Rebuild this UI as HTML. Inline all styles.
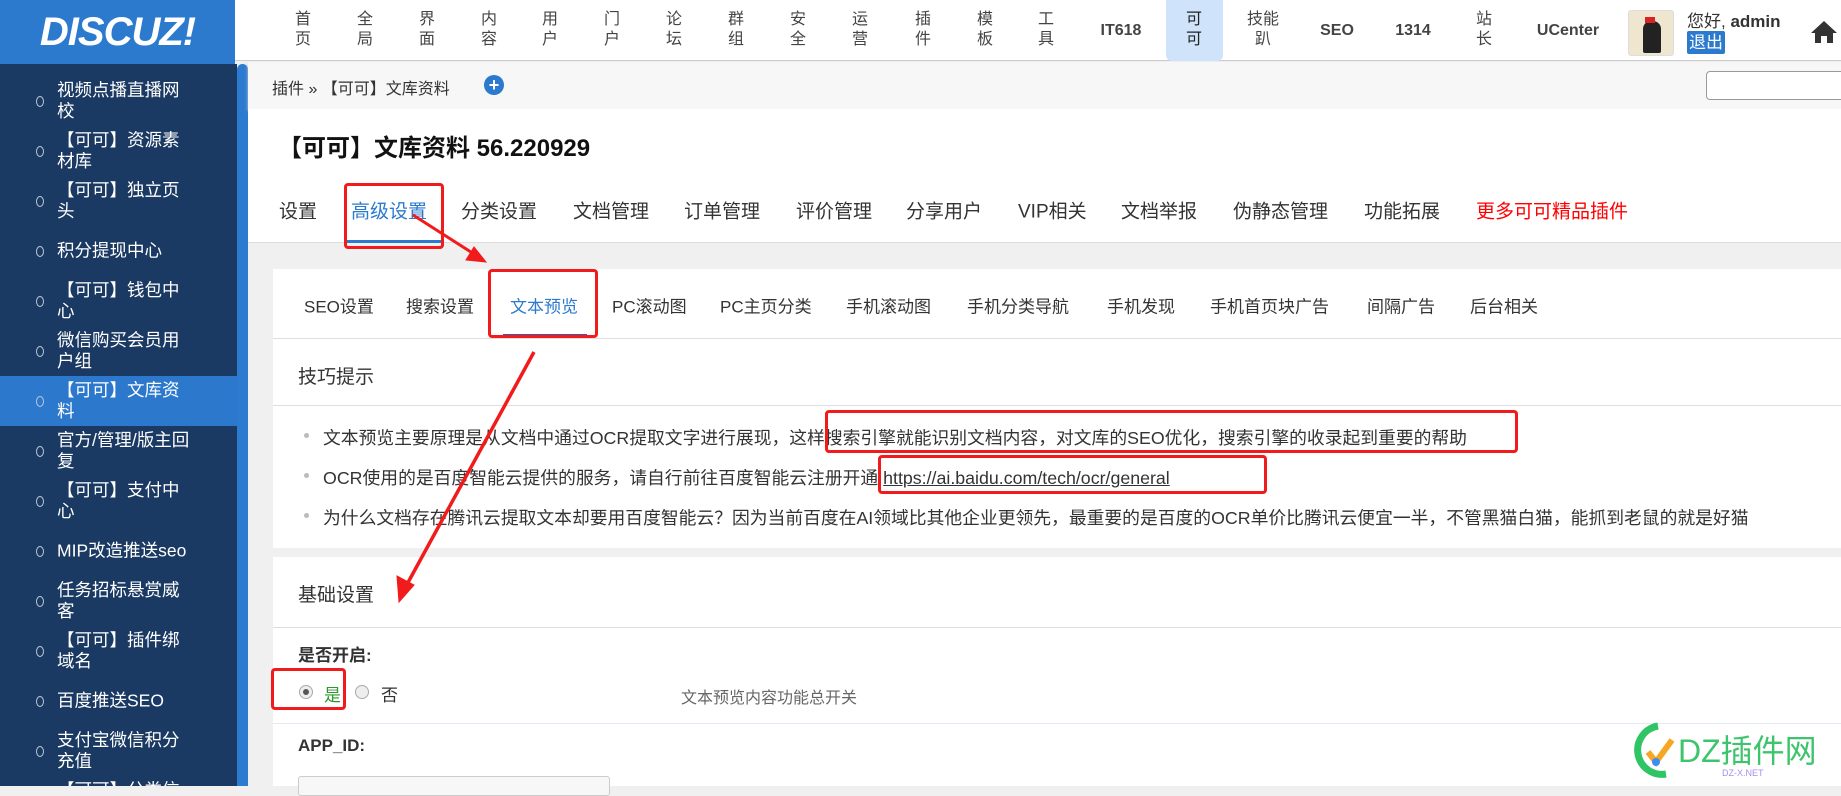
<!DOCTYPE html>
<html><head><meta charset="utf-8"><style>
*{margin:0;padding:0;box-sizing:border-box}
body{width:1841px;height:786px;overflow:hidden;background:#f0f0f0;font-family:"Liberation Sans","Noto Sans CJK SC",sans-serif;color:#333;position:relative}
.a{position:absolute;white-space:nowrap}
#hdr{position:absolute;left:0;top:0;width:1841px;height:61px;background:#fff;border-bottom:1px solid #ccc}
#logo{position:absolute;left:0;top:0;width:235px;height:64px;background:#2b7acd;color:#fff;font:italic bold 40px "Liberation Sans",sans-serif;text-align:center;line-height:64px;letter-spacing:-1px}
.nv{position:absolute;top:10px;font-size:16px;line-height:20px;color:#444;text-align:center;width:20px;margin-left:-10px;white-space:normal}
.nb{position:absolute;top:0;height:61px;line-height:61px;font-size:16px;font-weight:bold;color:#444;transform:translateX(-50%)}
#side{position:absolute;left:0;top:64px;width:237px;height:722px;background:#1b3a63;overflow:hidden}
.si{position:absolute;left:0;width:237px;height:50px;color:#fff;font-size:17.5px;line-height:21px}
.si span{position:absolute;left:57px;top:50%;transform:translateY(-50%);width:135px;white-space:normal}
.si i{position:absolute;left:36px;top:50%;width:8px;height:11px;margin-top:-5px;border:1px solid #bcc6d4;border-radius:50%}
.card{position:absolute;left:273px;width:1568px;background:#fff}
.t{position:absolute;font-size:19px;transform:translateY(-50%)}
.st{position:absolute;font-size:17px;transform:translateY(-50%);top:305px}
.rb{position:absolute;border:3px solid #f21b1b;border-radius:4px}
.tip{position:absolute;left:323px;font-size:17.8px;white-space:nowrap}
</style></head><body>
<div id="hdr"></div>
<div id="logo">DISCUZ!</div>
<div class="nv" style="left:303px">首页</div><div class="nv" style="left:365px">全局</div><div class="nv" style="left:427px">界面</div><div class="nv" style="left:489px">内容</div><div class="nv" style="left:550px">用户</div><div class="nv" style="left:612px">门户</div><div class="nv" style="left:674px">论坛</div><div class="nv" style="left:736px">群组</div><div class="nv" style="left:798px">安全</div><div class="nv" style="left:860px">运营</div><div class="nv" style="left:923px">插件</div><div class="nv" style="left:985px">模板</div><div class="nv" style="left:1046px">工具</div>
<div class="nb" style="left:1121px">IT618</div>
<div class="a" style="left:1166px;top:0;width:57px;height:61px;background:#cfe3fa;border-radius:0 0 6px 6px"></div>
<div class="nv" style="left:1194px;color:#222">可可</div>
<div class="nv" style="left:1263px;width:34px;margin-left:-17px">技能趴</div>
<div class="nb" style="left:1337px">SEO</div><div class="nb" style="left:1413px">1314</div>
<div class="nv" style="left:1484px">站长</div>
<div class="nb" style="left:1568px">UCenter</div>
<div class="a" style="left:1628px;top:10px;width:46px;height:46px;background:#efe6d0;border:1px solid #ddd;border-radius:3px"><div style="position:absolute;left:14px;top:10px;width:18px;height:32px;background:#222;border-radius:8px 8px 2px 2px"></div><div style="position:absolute;left:16px;top:6px;width:10px;height:6px;background:#d22"></div></div>
<div class="a" style="left:1687px;top:7px;font-size:17px">您好, <b>admin</b></div>
<div class="a" style="left:1687px;top:31px;background:#2b7acd;color:#fff;font-size:17px;padding:0 2px;border-radius:2px;line-height:23px">退出</div>
<svg class="a" style="left:1810px;top:20px" width="28" height="24" viewBox="0 0 28 24"><path d="M14 1 L1 13 H5 V23 H11 V16 H17 V23 H23 V13 H27 Z" fill="#333"/></svg>

<div id="side">
<div class="si" style="top:12px"><i></i><span>视频点播直播网校</span></div>
<div class="si" style="top:62px"><i></i><span>【可可】资源素材库</span></div>
<div class="si" style="top:112px"><i></i><span>【可可】独立页头</span></div>
<div class="si" style="top:162px"><i></i><span>积分提现中心</span></div>
<div class="si" style="top:212px"><i></i><span>【可可】钱包中心</span></div>
<div class="si" style="top:262px"><i></i><span>微信购买会员用户组</span></div>
<div class="si" style="top:312px;background:#2b78cc"><i></i><span>【可可】文库资料</span></div>
<div class="si" style="top:362px"><i></i><span>官方/管理/版主回复</span></div>
<div class="si" style="top:412px"><i></i><span>【可可】支付中心</span></div>
<div class="si" style="top:462px"><i></i><span>MIP改造推送seo</span></div>
<div class="si" style="top:512px"><i></i><span>任务招标悬赏威客</span></div>
<div class="si" style="top:562px"><i></i><span>【可可】插件绑域名</span></div>
<div class="si" style="top:612px"><i></i><span>百度推送SEO</span></div>
<div class="si" style="top:662px"><i></i><span>支付宝微信积分充值</span></div>
<div class="si" style="top:712px"><i></i><span>【可可】分类信息</span></div>
</div>
<div class="a" style="left:237px;top:64px;width:11px;height:722px;background:#2c7bd1;border-radius:6px 6px 0 0"></div>

<div class="a" style="left:248px;top:62px;width:1593px;height:47px;background:#f7f7f7;box-shadow:0 2px 3px #ccc"></div>
<div class="a" style="left:272px;top:75px;font-size:16px">插件 » 【可可】文库资料</div>
<div class="a" style="left:484px;top:75px;width:20px;height:20px;border-radius:50%;background:#2b7acd;color:#fff;font:bold 18px/20px 'Liberation Sans';text-align:center">+</div>
<div class="a" style="left:1706px;top:71px;width:140px;height:29px;border:1px solid #999;border-radius:4px;background:#fff"></div>

<div class="a" style="left:248px;top:109px;width:1593px;height:134px;background:#fff;border-bottom:1px solid #ddd"></div>
<div class="a" style="left:278px;top:128px;font-size:24px;font-weight:bold;color:#111">【可可】文库资料 56.220929</div>
<div class="t" style="left:279px;top:210px">设置</div>
<div class="t" style="left:351px;top:210px;color:#2b7acd">高级设置</div>
<div class="a" style="left:347px;top:240px;width:94px;height:3px;background:#2b7acd"></div>
<div class="t" style="left:461px;top:210px">分类设置</div><div class="t" style="left:573px;top:210px">文档管理</div><div class="t" style="left:684px;top:210px">订单管理</div><div class="t" style="left:796px;top:210px">评价管理</div><div class="t" style="left:906px;top:210px">分享用户</div><div class="t" style="left:1018px;top:210px">VIP相关</div><div class="t" style="left:1121px;top:210px">文档举报</div><div class="t" style="left:1233px;top:210px">伪静态管理</div><div class="t" style="left:1364px;top:210px">功能拓展</div><div class="t" style="left:1476px;top:210px;color:#f00">更多可可精品插件</div>

<div class="card" style="top:269px;height:279px"></div>
<div class="a" style="left:273px;top:338px;width:1568px;height:1px;background:#ddd"></div>
<div class="st" style="left:304px">SEO设置</div><div class="st" style="left:406px">搜索设置</div><div class="st" style="left:510px;color:#2b7acd">文本预览</div><div class="st" style="left:612px">PC滚动图</div><div class="st" style="left:720px">PC主页分类</div><div class="st" style="left:846px">手机滚动图</div><div class="st" style="left:967px">手机分类导航</div><div class="st" style="left:1107px">手机发现</div><div class="st" style="left:1210px">手机首页块广告</div><div class="st" style="left:1367px">间隔广告</div><div class="st" style="left:1470px">后台相关</div>
<div class="a" style="left:503px;top:334px;width:84px;height:3px;background:#3a5fa8"></div>
<div class="a" style="left:298px;top:362px;font-size:19px">技巧提示</div>
<div class="a" style="left:273px;top:405px;width:1568px;height:1px;background:#ddd"></div>
<div class="a" style="left:304px;top:433px;width:5px;height:5px;border-radius:50%;background:#bbb"></div>
<div class="a" style="left:304px;top:473px;width:5px;height:5px;border-radius:50%;background:#bbb"></div>
<div class="a" style="left:304px;top:513px;width:5px;height:5px;border-radius:50%;background:#bbb"></div>
<div class="tip" style="top:424px">文本预览主要原理是从文档中通过OCR提取文字进行展现，这样搜索引擎就能识别文档内容，对文库的SEO优化，搜索引擎的收录起到重要的帮助</div>
<div class="tip" style="top:464px">OCR使用的是百度智能云提供的服务，请自行前往百度智能云注册开通 <span style="text-decoration:underline">https://ai.baidu.com/tech/ocr/general</span></div>
<div class="tip" style="top:504px">为什么文档存在腾讯云提取文本却要用百度智能云？因为当前百度在AI领域比其他企业更领先，最重要的是百度的OCR单价比腾讯云便宜一半，不管黑猫白猫，能抓到老鼠的就是好猫</div>

<div class="card" style="top:557px;height:229px"></div>
<div class="a" style="left:298px;top:580px;font-size:19px">基础设置</div>
<div class="a" style="left:273px;top:627px;width:1568px;height:1px;background:#ddd"></div>
<div class="a" style="left:298px;top:641px;font-size:17px;font-weight:bold">是否开启:</div>
<div class="a" style="left:299px;top:685px;width:14px;height:14px;border-radius:50%;border:1px solid #aaa;background:#eee"><div style="position:absolute;left:3px;top:3px;width:6px;height:6px;border-radius:50%;background:#555"></div></div>
<div class="a" style="left:324px;top:681px;font-size:17px;color:#2a9a2a">是</div>
<div class="a" style="left:355px;top:685px;width:14px;height:14px;border-radius:50%;border:1px solid #aaa;background:#eee"></div>
<div class="a" style="left:381px;top:681px;font-size:17px">否</div>
<div class="a" style="left:681px;top:684px;font-size:16px;color:#666">文本预览内容功能总开关</div>
<div class="a" style="left:273px;top:723px;width:1568px;height:1px;background:#e3eaf3"></div>
<div class="a" style="left:298px;top:736px;font-size:17px;font-weight:bold">APP_ID:</div>
<div class="a" style="left:298px;top:776px;width:312px;height:20px;border:1px solid #ccc;border-radius:3px;background:#f7f7f7"></div>

<div class="rb" style="left:344px;top:183px;width:100px;height:66px"></div>
<div class="rb" style="left:488px;top:269px;width:110px;height:69px"></div>
<div class="rb" style="left:825px;top:410px;width:693px;height:43px"></div>
<div class="rb" style="left:878px;top:455px;width:389px;height:39px"></div>
<div class="rb" style="left:271px;top:668px;width:75px;height:42px"></div>
<svg class="a" style="left:0;top:0" width="1841" height="786"><g fill="#f21b1b" stroke="#f21b1b">
<line x1="413" y1="215" x2="474" y2="254" stroke-width="3"/><polygon points="486,262 466,260 474,247"/>
<line x1="534" y1="352" x2="405" y2="588" stroke-width="3.5"/><polygon points="399,602 397,576 414,585"/></g></svg>

<svg class="a" style="left:1630px;top:720px" width="200" height="60" viewBox="0 0 200 60"><path d="M28 6 A24 24 0 1 0 36 54" fill="none" stroke="#2fc464" stroke-width="7"/><path d="M18 32 L26 42 L42 20" fill="none" stroke="#f5a623" stroke-width="6"/><circle cx="26" cy="42" r="4" fill="#3a8ef5"/><text x="48" y="42" font-family="Liberation Sans,Noto Sans CJK SC,sans-serif" font-size="32" fill="#3ec46d">DZ插件网</text><text x="92" y="56" font-size="9" fill="#a88ef0" font-family="Liberation Sans">DZ-X.NET</text></svg>
</body></html>
